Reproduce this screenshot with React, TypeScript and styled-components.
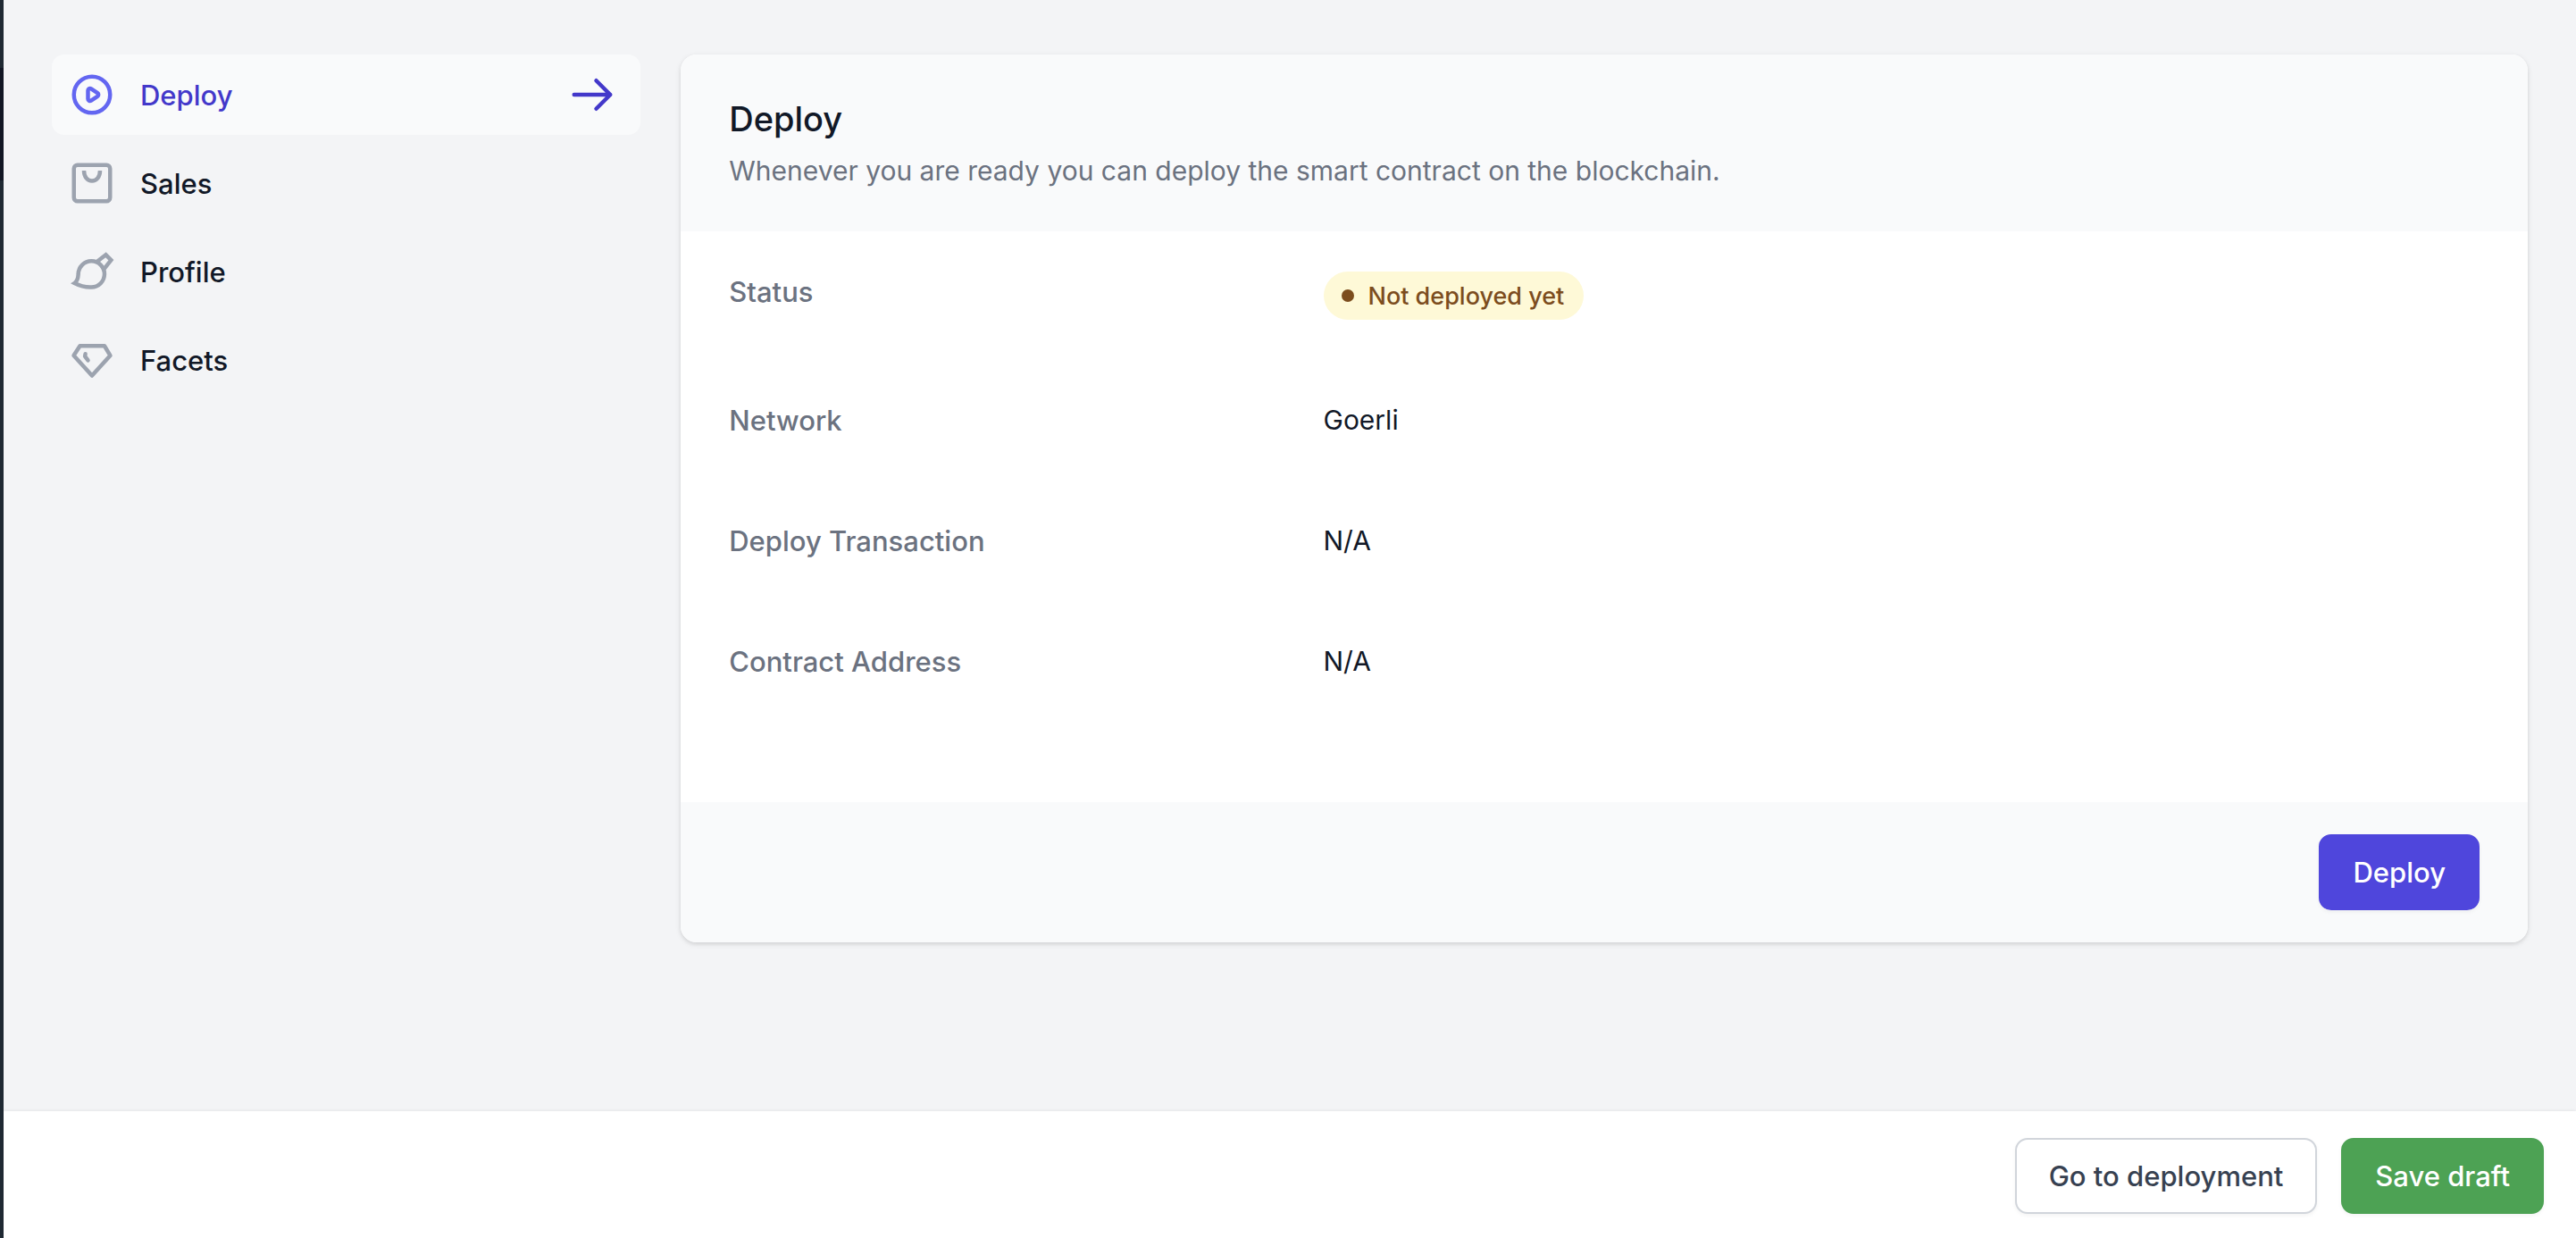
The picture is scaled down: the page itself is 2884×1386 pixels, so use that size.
import React from 'react';
import styled, { createGlobalStyle, css } from 'styled-components';

const GlobalStyle = createGlobalStyle`
  *, *::before, *::after { box-sizing: border-box; }
  body {
    margin: 0;
    background: #f3f4f6;
    color: #111827;
    font-family: Inter, "Liberation Sans", sans-serif;
    font-size: 30px;
    line-height: 45px;
  }
`;

const mediumText = css`
  font-size: 31px;
  font-weight: 500;
`;

const Shell = styled.div`
  display: flex;
  min-height: 100vh;
`;

const Rail = styled.div`
  flex: none;
  width: 4px;
  padding-top: 76px;
  background: #1f2933;
`;

const RailMarker = styled.div`
  height: 126px;
  background: #111623;
`;

const Page = styled.div`
  flex: 1;
  min-width: 0;
  display: flex;
  flex-direction: column;
`;

const Content = styled.main`
  flex: 1;
  display: grid;
  grid-template-columns: repeat(12, minmax(0, 1fr));
  align-items: start;
  column-gap: 45px;
  padding: 61px 54px;
`;

const Nav = styled.nav`
  grid-column: span 3;
  display: flex;
  flex-direction: column;
  gap: 9px;
`;

const NavItem = styled.a<{ $active?: boolean }>`
  display: flex;
  align-items: center;
  gap: 27px;
  padding: 18px 27px 18px 18px;
  border-radius: 14px;
  text-decoration: none;
  color: ${(p) => (p.$active ? '#4338ca' : '#111827')};
  background: ${(p) => (p.$active ? '#f9fafb' : 'transparent')};
  ${mediumText}
`;

const NavLabel = styled.span`
  flex: 1;
`;

const Icon = styled.svg<{ $tone: string }>`
  flex: none;
  width: 54px;
  height: 54px;
  fill: none;
  stroke: ${(p) => p.$tone};
  stroke-width: 2;
`;

const Card = styled.section`
  grid-column: span 9;
  overflow: hidden;
  border-radius: 18px;
  background: #ffffff;
  box-shadow: 0 2px 6px rgba(0, 0, 0, 0.1), 0 2px 4px rgba(0, 0, 0, 0.06);
`;

const CardHeader = styled.header`
  padding: 45px 54px;
  background: #f9fafb;
`;

const Title = styled.h1`
  margin: 0;
  font-size: 38px;
  font-weight: 500;
  line-height: 54px;
`;

const Description = styled.p`
  margin: 9px 0 0;
  color: #6b7280;
`;

const Details = styled.dl`
  margin: 0;
  padding-bottom: 90px;
`;

const DetailRow = styled.div`
  display: grid;
  grid-template-columns: repeat(3, minmax(0, 1fr));
  column-gap: 36px;
  padding: 45px 54px;
`;

const Term = styled.dt`
  color: #6b7280;
  ${mediumText}
`;

const Value = styled.dd`
  grid-column: span 2;
  margin: 0;
`;

const Badge = styled.span`
  display: inline-flex;
  vertical-align: top;
  align-items: center;
  gap: 16px;
  height: 54px;
  padding: 0 22px 0 20px;
  border-radius: 27px;
  background: #fef9d7;
  color: #7c4d1e;
  font-size: 27px;
  font-weight: 500;
`;

const Dot = styled.span`
  width: 14px;
  height: 14px;
  border-radius: 50%;
  background: currentColor;
`;

const CardFooter = styled.footer`
  display: flex;
  justify-content: flex-end;
  padding: 36px 54px;
  background: #f9fafb;
`;

const ActionBar = styled.footer`
  display: flex;
  justify-content: flex-end;
  gap: 27px;
  padding: 30px 36px 27px;
  background: #ffffff;
  box-shadow: 0 -1px 3px rgba(0, 0, 0, 0.06);
`;

const tones = {
  primary: css`
    background: #4f46dc;
    border-color: #4f46dc;
    color: #ffffff;
  `,
  success: css`
    background: #4da254;
    border-color: #4da254;
    color: #ffffff;
  `,
  plain: css`
    background: #ffffff;
    border-color: #d1d5db;
    color: #374151;
  `,
};

const Button = styled.button<{ $tone: keyof typeof tones }>`
  height: 85px;
  padding: 0 36px;
  border: 2px solid;
  border-radius: 14px;
  font-family: inherit;
  line-height: 45px;
  box-shadow: 0 2px 4px rgba(0, 0, 0, 0.05);
  cursor: pointer;
  ${mediumText}
  ${(p) => tones[p.$tone]}
`;

const ACTIVE = '#6366f1';
const MUTED = '#9ca3af';

const PlayIcon = () => (
  <Icon $tone={ACTIVE} viewBox="0 0 24 24" strokeLinecap="round" strokeLinejoin="round" aria-hidden="true">
    <path d="M14.752 11.168l-3.197-2.132A1 1 0 0010 9.87v4.263a1 1 0 001.555.832l3.197-2.132a1 1 0 000-1.664z" />
    <circle cx="12" cy="12" r="9" />
  </Icon>
);

const BagIcon = () => (
  <Icon $tone={MUTED} viewBox="0 0 24 24" aria-hidden="true">
    <rect x="3" y="3" width="18" height="18" rx="1.8" />
    <path d="M8 5.8c0 3 1.7 5.1 4 5.1s4-2.1 4-5.1" />
  </Icon>
);

const BrushIcon = () => (
  <Icon $tone={MUTED} viewBox="0 0 24 24" aria-hidden="true">
    <path d="M3.3 17.8C4.9 16.7 5.1 15.2 5.2 13.3A6.5 6.5 0 1 1 11.6 19.8C8.9 19.9 5.8 19.1 3.3 17.8z" />
    <path d="M14.3 7.2L18.900 3.700 21.500 6.300 18 10.700" />
  </Icon>
);

const GemIcon = () => (
  <Icon $tone={MUTED} viewBox="0 0 24 24" aria-hidden="true">
    <path d="M6 5h12.2l2.9 4.8-9.1 10-9.1-10z" strokeLinejoin="round" />
    <path d="M8.7 9l-.2 1.2 1.5 2" strokeLinecap="round" strokeLinejoin="round" />
  </Icon>
);

const ArrowIcon = () => (
  <Icon $tone="#4338ca" viewBox="0 0 24 24" strokeLinecap="round" strokeLinejoin="round" aria-hidden="true">
    <path d="M14 5l7 7m0 0l-7 7m7-7H3" />
  </Icon>
);

const sections = [
  { label: 'Deploy', icon: <PlayIcon />, active: true },
  { label: 'Sales', icon: <BagIcon /> },
  { label: 'Profile', icon: <BrushIcon /> },
  { label: 'Facets', icon: <GemIcon /> },
];

const details: { term: string; value: React.ReactNode }[] = [
  {
    term: 'Status',
    value: (
      <Badge>
        <Dot />
        Not deployed yet
      </Badge>
    ),
  },
  { term: 'Network', value: 'Goerli' },
  { term: 'Deploy Transaction', value: 'N/A' },
  { term: 'Contract Address', value: 'N/A' },
];

export default function App() {
  return (
    <>
      <GlobalStyle />
      <Shell>
        <Rail>
          <RailMarker />
        </Rail>
        <Page>
          <Content>
            <Nav>
              {sections.map((s) => (
                <NavItem
                  key={s.label}
                  href={`#${s.label.toLowerCase()}`}
                  $active={s.active}
                  aria-current={s.active ? 'page' : undefined}
                >
                  {s.icon}
                  <NavLabel>{s.label}</NavLabel>
                  {s.active && <ArrowIcon />}
                </NavItem>
              ))}
            </Nav>
            <Card>
              <CardHeader>
                <Title>Deploy</Title>
                <Description>Whenever you are ready you can deploy the smart contract on the blockchain.</Description>
              </CardHeader>
              <Details>
                {details.map((d) => (
                  <DetailRow key={d.term}>
                    <Term>{d.term}</Term>
                    <Value>{d.value}</Value>
                  </DetailRow>
                ))}
              </Details>
              <CardFooter>
                <Button type="button" $tone="primary">Deploy</Button>
              </CardFooter>
            </Card>
          </Content>
          <ActionBar>
            <Button type="button" $tone="plain">Go to deployment</Button>
            <Button type="button" $tone="success">Save draft</Button>
          </ActionBar>
        </Page>
      </Shell>
    </>
  );
}
